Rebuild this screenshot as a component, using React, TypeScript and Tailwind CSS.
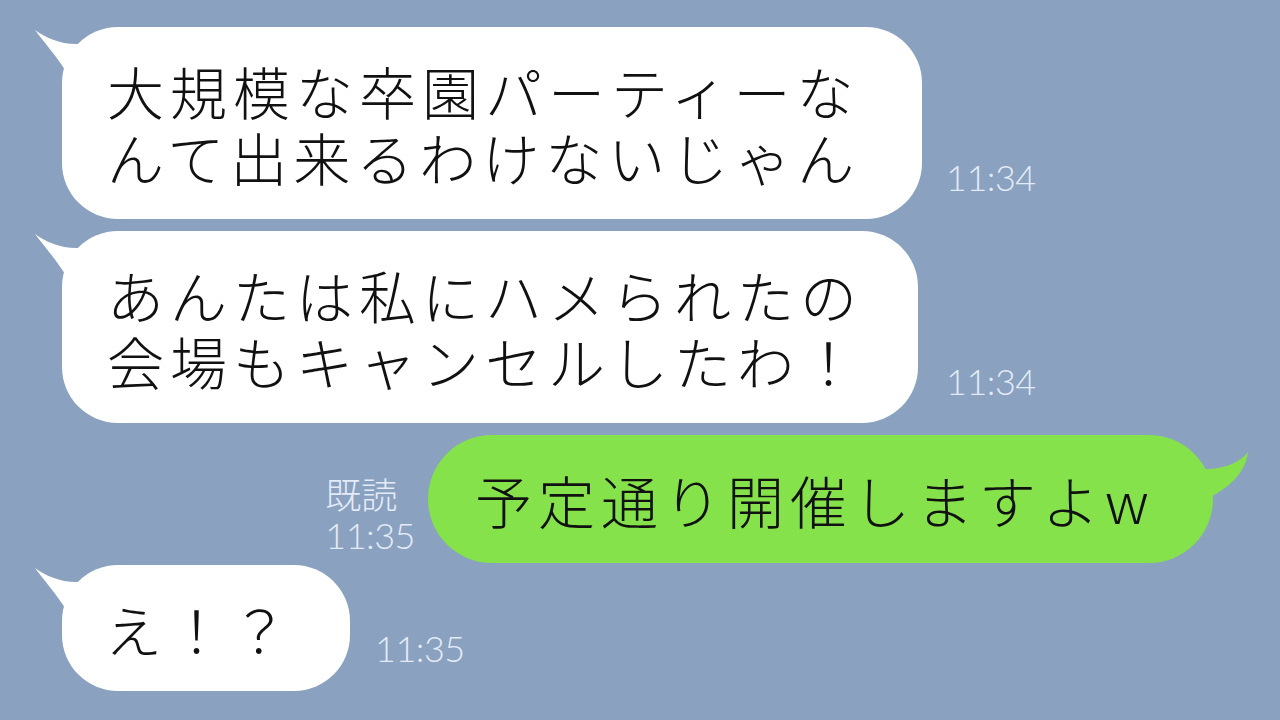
import type { ReactNode } from 'react'

const JP = "font-['Noto_Sans_CJK_JP',sans-serif]"
const TIME = "font-['Lato',sans-serif] font-light text-[36px] leading-none tracking-[-0.5px] text-[#e3ebf6]"

function WhiteBubble({ width, children }: { width: string; children: ReactNode }) {
  return (
    <div className={`relative rounded-[56px] bg-white ${width}`}>
      <svg className="absolute -left-[30px] top-0" width="80" height="80" viewBox="0 0 80 80">
        <path d="M3 3 C 15 12, 35 20, 55 16 L 80 16 L 80 70 L 33 70 L 33 43 C 25 30, 12 15, 3 3 Z" fill="#ffffff" />
      </svg>
      <div className={`relative whitespace-nowrap text-[57px] leading-[66px] tracking-[6px] text-[#111] font-light ${JP}`}>
        {children}
      </div>
    </div>
  )
}

function Time({ label, className = '' }: { label: string; className?: string }) {
  return <div className={`${TIME} ${className}`}>{label}</div>
}

export default function App() {
  return (
    <div className="flex min-h-screen w-full flex-col bg-[#8aa1c0] pt-[27px]">
      <div className="flex items-end gap-[24px] pl-[62px]">
        <WhiteBubble width="w-[860px]">
          <p className="py-[30px] pl-[45px]">
            大規模な卒園パーティーな
            <br />
            んて出来るわけないじゃん
          </p>
        </WhiteBubble>
        <Time label="11:34" className="mb-[24px]" />
      </div>

      <div className="mt-[12px] flex items-end gap-[28px] pl-[62px]">
        <WhiteBubble width="w-[856px]">
          <p className="py-[30px] pl-[45px]">
            あんたは私にハメられたの
            <br />
            会場もキャンセルしたわ！
          </p>
        </WhiteBubble>
        <Time label="11:34" className="mb-[24px]" />
      </div>

      <div className="mt-[12px] flex items-end justify-end gap-[13px] pr-[67px]">
        <div className="mb-[4px] flex flex-col items-start">
          <div className={`text-[36px] leading-[40px] font-light text-[#e3ebf6] ${JP}`}>既読</div>
          <Time label="11:35" className="mt-[4px] mb-[6px]" />
        </div>
        <div className="relative w-[785px] rounded-[64px] bg-[#85e24a]">
          <svg className="absolute -right-[40px] top-0" width="80" height="80" viewBox="0 0 80 80">
            <path d="M75 17 C 65 30, 45 36, 20 34 L 20 70 L 38 70 L 38 62 C 55 52, 72 40, 75 17 Z" fill="#85e24a" />
          </svg>
          <div className={`relative whitespace-nowrap py-[31px] pl-[47px] text-[57px] leading-[66px] tracking-[6px] text-[#111] font-light ${JP}`}>
            予定通り開催しますよw
          </div>
        </div>
      </div>

      <div className="mt-[2px] flex items-end gap-[25px] pl-[62px]">
        <WhiteBubble width="w-[288px]">
          <p className="py-[30px] pl-[43px]">え！？</p>
        </WhiteBubble>
        <Time label="11:35" className="mb-[25px]" />
      </div>
    </div>
  )
}
